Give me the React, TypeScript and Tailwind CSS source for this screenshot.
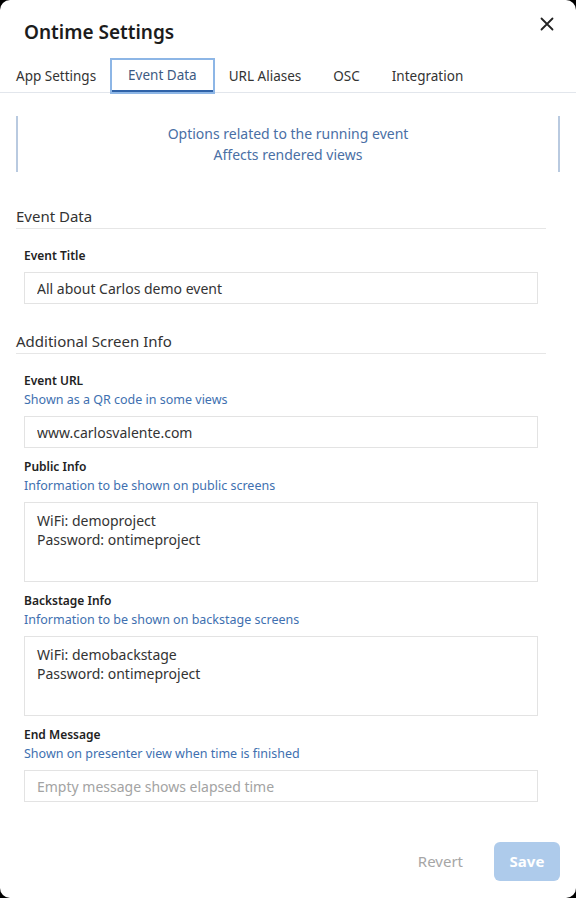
import { useState } from "react";

const tabs = ["App Settings", "Event Data", "URL Aliases", "OSC", "Integration"];

function SectionTitle({ children }: { children: string }) {
  return (
    <h3 className="mr-[14px] border-b border-[#e6e6e6] text-[15px] leading-[24px] text-[#333333]">
      {children}
    </h3>
  );
}

function Field({
  label,
  description,
  children,
}: {
  label: string;
  description?: string;
  children: React.ReactNode;
}) {
  return (
    <div className="flex flex-col">
      <label className="block text-[12px] font-semibold leading-[19px] text-[#222222]">{label}</label>
      {description && (
        <span className="block text-[12.5px] leading-[19px] text-[#4070b0]">{description}</span>
      )}
      <div className="mt-[7px] flex">{children}</div>
    </div>
  );
}

function App() {
  const [active, setActive] = useState("Event Data");
  const [title, setTitle] = useState("All about Carlos demo event");
  const [url, setUrl] = useState("www.carlosvalente.com");
  const [publicInfo, setPublicInfo] = useState("WiFi: demoproject\nPassword: ontimeproject");
  const [backstageInfo, setBackstageInfo] = useState("WiFi: demobackstage\nPassword: ontimeproject");
  const [endMessage, setEndMessage] = useState("");

  const inputClass =
    "block w-full h-[32px] border border-[#e3e3e3] bg-white px-3 text-[14px] text-[#333333] placeholder-[#a3a3a3] focus:outline-none";
  const areaClass =
    "block w-full h-[80px] resize-none border border-[#e3e3e3] bg-white px-3 py-2 text-[14px] leading-[19px] text-[#333333] focus:outline-none";

  return (
    <div className="min-h-screen bg-black" style={{ fontFamily: '"Noto Sans", "Open Sans", sans-serif' }}>
      <div className="flex h-[898px] flex-col rounded-[10px] bg-white">
        <div className="flex items-start justify-between pl-6 pr-[22px] pt-[18px]">
          <h2 className="text-[19px] font-semibold leading-[28px] text-[#1c1c1c]">Ontime Settings</h2>
          <button className="-mt-px cursor-pointer text-[#222222]">
            <svg width="14" height="14" viewBox="0 0 14 14" fill="none" stroke="currentColor" strokeWidth="1.8" strokeLinecap="round">
              <path d="M1.5 1.5L12.5 12.5M12.5 1.5L1.5 12.5" />
            </svg>
          </button>
        </div>

        <div className="mt-[14px] flex border-b border-[#e2e6ec]">
          {tabs.map((tab) => (
            <button
              key={tab}
              onClick={() => setActive(tab)}
              className={
                tab === active
                  ? "h-[32px] cursor-pointer border-b-2 border-[#2f62a8] px-4 text-[13.5px] text-[#3d5a82] outline-2 outline-[#8db6e6]"
                  : "h-[32px] cursor-pointer px-4 text-[13.5px] text-[#333333]"
              }
            >
              {tab}
            </button>
          ))}
        </div>

        <div className="flex flex-1 flex-col px-4">
          <div className="mt-[23px] flex h-[56px] flex-col items-center justify-center border-x-2 border-[#b9cae0] text-[14px] leading-[21px] text-[#4a6fa5]">
            <span>Options related to the running event</span>
            <span>Affects rendered views</span>
          </div>

          <div className="mt-[32px]">
            <SectionTitle>Event Data</SectionTitle>
            <div className="flex flex-col pl-2 pr-[22px] pt-[17px]">
              <Field label="Event Title">
                <input className={inputClass} value={title} onChange={(e) => setTitle(e.target.value)} />
              </Field>
            </div>
          </div>

          <div className="mt-[25px]">
            <SectionTitle>Additional Screen Info</SectionTitle>
            <div className="flex flex-col gap-[9px] pl-2 pr-[22px] pt-[17px]">
              <Field label="Event URL" description="Shown as a QR code in some views">
                <input className={inputClass} value={url} onChange={(e) => setUrl(e.target.value)} />
              </Field>
              <Field label="Public Info" description="Information to be shown on public screens">
                <textarea className={areaClass} value={publicInfo} onChange={(e) => setPublicInfo(e.target.value)} />
              </Field>
              <Field label="Backstage Info" description="Information to be shown on backstage screens">
                <textarea className={areaClass} value={backstageInfo} onChange={(e) => setBackstageInfo(e.target.value)} />
              </Field>
              <Field label="End Message" description="Shown on presenter view when time is finished">
                <input
                  className={inputClass}
                  placeholder="Empty message shows elapsed time"
                  value={endMessage}
                  onChange={(e) => setEndMessage(e.target.value)}
                />
              </Field>
            </div>
          </div>
        </div>

        <div className="flex items-center justify-end gap-[31px] pb-[17px] pr-4">
          <button disabled className="text-[15px] text-[#a6a6a6]">Revert</button>
          <button disabled className="h-[39px] w-[66px] rounded-md bg-[#aecbeb] text-[15px] font-bold text-white">
            Save
          </button>
        </div>
      </div>
    </div>
  );
}

export default App;
